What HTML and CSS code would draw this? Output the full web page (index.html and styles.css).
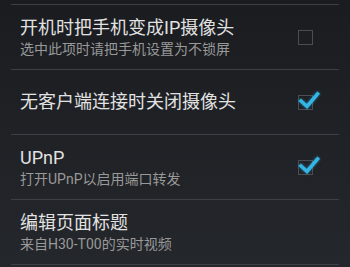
FILE: index.html
```html
<!DOCTYPE html>
<html>
<head>
  <meta charset="utf-8">
  <title>设置</title>
  <link rel="stylesheet" href="styles.css">
</head>
<body>
  <ul class="prefs">
    <li class="pref">
      <div class="pref-text">
        <div class="pref-title">开机时把手机变成IP摄像头</div>
        <div class="pref-summary">选中此项时请把手机设置为不锁屏</div>
      </div>
      <span class="checkbox"></span>
    </li>
    <li class="pref">
      <div class="pref-text">
        <div class="pref-title">无客户端连接时关闭摄像头</div>
      </div>
      <span class="checkbox checked">
        <svg class="tick" width="24" height="24" viewBox="0 0 24 24"><path d="M5 10 L11 15.5 L21.5 3" /></svg>
      </span>
    </li>
    <li class="pref">
      <div class="pref-text">
        <div class="pref-title">UPnP</div>
        <div class="pref-summary">打开UPnP以启用端口转发</div>
      </div>
      <span class="checkbox checked">
        <svg class="tick" width="24" height="24" viewBox="0 0 24 24"><path d="M5 10 L11 15.5 L21.5 3" /></svg>
      </span>
    </li>
    <li class="pref">
      <div class="pref-text">
        <div class="pref-title">编辑页面标题</div>
        <div class="pref-summary">来自H30-T00的实时视频</div>
      </div>
    </li>
  </ul>
</body>
</html>
```

FILE: styles.css
```css
html, body {
  height: 100%;
}

body {
  margin: 0;
  padding-top: 4px;
  box-sizing: border-box;
  background: linear-gradient(to bottom, #1a1c20, #24272b);
  font-family: Roboto, "Noto Sans CJK SC", sans-serif;
  overflow: hidden;
}

.prefs {
  list-style: none;
  margin: 0 11px;
  padding: 0;
  border-bottom: 1px solid #3c3f43;
}

.pref {
  height: 64px;
  border-top: 1px solid #3c3f43;
  display: flex;
  align-items: center;
  padding: 0 26px 0 9px;
}

.pref-text {
  flex: 1;
}

.pref-title {
  color: #e2e2e2;
  font-size: 18px;
  line-height: 22px;
}

.pref-summary {
  color: #999999;
  font-size: 14px;
  line-height: 18px;
  margin-top: 1px;
}

.checkbox {
  position: relative;
  width: 13px;
  height: 13px;
  border: 1.5px solid #4a4d51;
  margin-top: 1px;
}

.tick {
  position: absolute;
  left: -3.5px;
  top: -5.5px;
  overflow: visible;
}

.tick path {
  fill: none;
  stroke: #33b5e5;
  stroke-width: 3.6;
  stroke-linecap: square;
  stroke-linejoin: miter;
  filter: drop-shadow(0 0 1.5px rgba(51, 181, 229, 0.6));
}
```
